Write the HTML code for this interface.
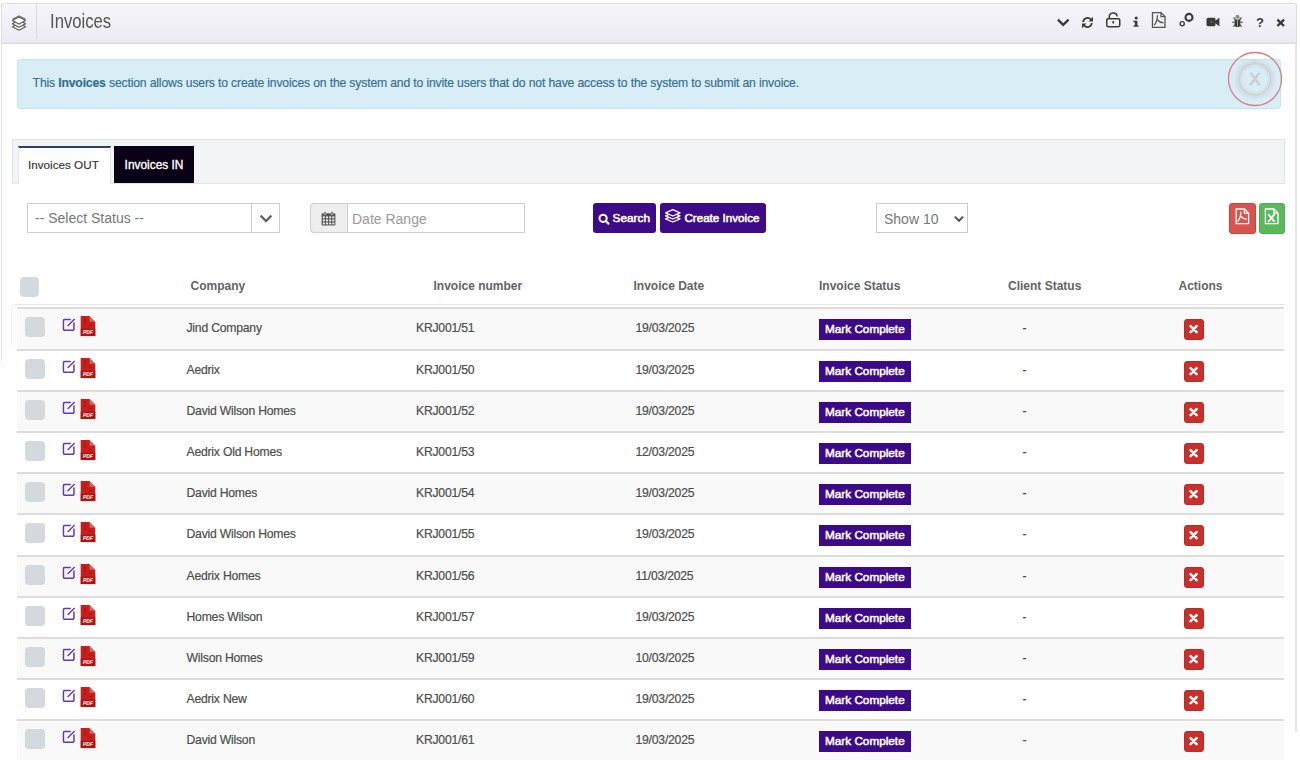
<!DOCTYPE html><html><head><meta charset="utf-8"><style>
*{box-sizing:border-box;margin:0;padding:0}
html,body{width:1300px;height:760px;overflow:hidden;background:#fff;font-family:"Liberation Sans",sans-serif;color:#333}
.a{position:absolute}
.panelL{left:0.5px;top:3px;width:1.6px;height:358px;background:#e2e2e2}
.panelR{left:1295px;top:3px;width:2px;height:729px;background:#e6e6e6}
.hdr{left:1px;top:2.8px;width:1295.5px;height:41.4px;background:linear-gradient(#f6f5fa,#ecebf3);border:1px solid #dcdbe0;border-radius:4px 4px 0 0;box-shadow:inset 0 1px 0 #fbfbfd,inset 0 -1px 0 #e4e3ea}
.hsep{left:36px;top:4px;width:1px;height:35px;background:#d9d9df}
.title{left:50px;top:10.2px;font-size:19.5px;color:#555;transform:scaleX(0.855);transform-origin:0 0}
.info{left:17px;top:59px;width:1264px;height:49.5px;background:#d9edf7;border:1px solid #bce8f1;border-radius:4px}
.infot{left:32.6px;top:76.2px;font-size:12.2px;letter-spacing:-0.16px;-webkit-text-stroke:0.15px #31708f;color:#31708f;white-space:nowrap}
.tabbar{left:12px;top:139px;width:1273px;height:44.5px;background:#f3f4f6;border:1px solid #e1e4e8;border-bottom:1px solid #e1e4e8}
.tabout{left:18px;top:145.5px;width:93px;height:38.5px;background:#fff;border-top:2px solid #2b4266;border-left:1px solid #e3e6ea;border-right:1px solid #e3e6ea}
.tabin{left:114px;top:145.7px;width:80px;height:37.5px;background:#0a0016}
.sel{left:26.7px;top:203.3px;width:253.5px;height:30px;border:1px solid #cfcfcf;background:#fff}
.selsep{left:251px;top:204px;width:1px;height:28.5px;background:#cfcfcf}
.dr{left:310px;top:203px;width:215px;height:30px;border:1px solid #cfcfcf;border-radius:4px 0 0 4px;background:#fff}
.drad{left:310px;top:203px;width:38px;height:30px;background:#eee;border:1px solid #cfcfcf;border-radius:4px 0 0 4px}
.btnp{top:203px;height:30.3px;background:#3d0b87;border-radius:3px;color:#fff;font-weight:bold;font-size:11.5px}
.show{left:876px;top:203px;width:92px;height:30px;border:1px solid #cccccc;background:#fff}
.bpdf{left:1229.2px;top:203px;width:27px;height:30.5px;background:#d9534f;border:1px solid #d43f3a;border-radius:3px}
.bxls{left:1259px;top:203px;width:26.3px;height:30.5px;background:#5cb85c;border:1px solid #4cae4c;border-radius:3px}
.cb{width:19.6px;height:19.5px;background:#d4d9dd;border-radius:4px}
.th{top:278.8px;font-size:12px;font-weight:bold;color:#636363;white-space:nowrap}
.td{font-size:12.2px;letter-spacing:-0.22px;-webkit-text-stroke:0.2px #4e4e4e;color:#4e4e4e;white-space:nowrap}
.badge{width:92px;height:21.4px;background:#3c0a88;color:#fff;font-size:11.5px;font-weight:bold}
.del{width:20.5px;height:21.5px;background:#c9302c;border:1px solid #bb2a26;border-radius:3px}
</style></head><body><div class="a panelL"></div><div class="a panelR"></div>
<div class="a hdr"></div><div class="a hsep"></div>
<svg class="a" style="left:11px;top:14px" width="16" height="16" viewBox="0 0 16 16"><g fill="none" stroke="#666" stroke-width="1.3" stroke-linejoin="round"><path d="M8 2 L14 5 L8 8 L2 5 Z" fill="#fff"/><path d="M2.5 8 L8 10.8 L13.5 8"/><path d="M2.5 10.5 L8 13.3 L13.5 10.5"/></g></svg>
<div class="a title">Invoices</div>
<div class="a info"></div>
<div class="a infot">This <b>Invoices</b> section allows users to create invoices on the system and to invite users that do not have access to the system to submit an invoice.</div>
<div class="a tabbar"></div><div class="a tabout"></div><div class="a tabin"></div>
<div class="a" style="left:28px;top:158px;font-size:11.7px;-webkit-text-stroke:0.15px #333;color:#333">Invoices OUT</div>
<div class="a" style="left:124.6px;top:157.5px;font-size:11.9px;-webkit-text-stroke:0.35px #fff;color:#fff">Invoices IN</div>
<div class="a sel"></div><div class="a selsep"></div>
<div class="a" style="left:35px;top:210.3px;font-size:14px;color:#777">-- Select Status --</div>
<div class="a dr"></div><div class="a drad"></div>
<div class="a" style="left:352px;top:211px;font-size:14px;color:#999">Date Range</div>
<div class="a btnp" style="left:593px;width:63px"></div>
<div class="a btnp" style="left:660px;width:105.5px"></div>
<div class="a" style="left:612.6px;top:211.2px;font-size:11.8px;-webkit-text-stroke:0.55px #fff;color:#fff">Search</div>
<div class="a" style="left:684.4px;top:211.2px;font-size:11.65px;-webkit-text-stroke:0.55px #fff;color:#fff">Create Invoice</div>
<div class="a show"></div>
<div class="a" style="left:884px;top:210.5px;font-size:14px;color:#777">Show 10</div>
<div class="a bpdf"></div><div class="a bxls"></div>
<div class="a cb" style="left:19.6px;top:277px"></div>
<div class="a th" style="left:190.5px">Company</div>
<div class="a th" style="left:433.5px">Invoice number</div>
<div class="a th" style="left:633.5px">Invoice Date</div>
<div class="a th" style="left:819px">Invoice Status</div>
<div class="a th" style="left:1008px">Client Status</div>
<div class="a th" style="left:1178.5px">Actions</div>
<div class="a" style="left:11px;top:305px;width:1px;height:41px;background:#f2f2f2"></div>
<div class="a" style="left:14px;top:304px;width:1271px;height:1px;background:#e6e6e6"></div>
<div class="a" style="left:17px;top:307.0px;width:1266.5px;height:2px;background:#dddddd"></div>
<div class="a" style="left:17px;top:309.0px;width:1266.5px;height:40.0px;background:#f9f9f9"></div>
<div class="a cb" style="left:25px;top:317.0px"></div>
<div class="a td" style="left:186.5px;top:321.1px">Jind Company</div>
<div class="a td" style="left:416px;top:321.1px">KRJ001/51</div>
<div class="a td" style="left:635.5px;top:321.1px">19/03/2025</div>
<div class="a badge" style="left:818.5px;top:318.5px"></div>
<div class="a" style="left:825px;top:322.1px;font-size:11.75px;-webkit-text-stroke:0.5px #fff;color:#fff">Mark Complete</div>
<div class="a td" style="left:1022.5px;top:321.1px">-</div>
<svg class="a" style="left:61px;top:316.5px" width="16" height="16" viewBox="0 0 16 16"><path d="M9.8 2.55 H3.6 A1.15 1.15 0 0 0 2.45 3.7 V12.1 A1.15 1.15 0 0 0 3.6 13.25 H11.8 A1.15 1.15 0 0 0 12.95 12.1 V5.4" fill="none" stroke="#6438b8" stroke-width="1.5"/><path d="M6.6 9 L13.6 2" stroke="#6438b8" stroke-width="1.4"/></svg>
<svg class="a" style="left:80px;top:316.4px" width="16" height="21" viewBox="0 0 16 21"><path d="M0.7 0.1 H9.6 L15.3 5.7 V20.1 H0.7 Z" fill="#c7201c"/><path d="M9.6 0.1 V5.7 H15.3 Z" fill="#f0c8c0" opacity="0.4"/><path d="M0.7 12.6 H15.3 V20.1 H0.7 Z" fill="#b3120f"/><path d="M5 2 V8 M9 9 L12 9.6" stroke="#8c0c0a" stroke-width="0.9" opacity="0.7"/><text x="8" y="18.4" font-family="Liberation Sans" font-size="5" font-weight="bold" fill="#fff" text-anchor="middle" font-style="italic">PDF</text></svg>
<div class="a del" style="left:1183.7px;top:318.7px"></div>
<svg class="a" style="left:1187.2px;top:322.7px" width="13" height="12" viewBox="0 0 13 12"><path d="M3.6 3.1 L9.6 9.1 M9.6 3.1 L3.6 9.1" stroke="#fff" stroke-width="2.6" stroke-linecap="round"/></svg>
<div class="a" style="left:17px;top:349.0px;width:1266.5px;height:2px;background:#dddddd"></div>
<div class="a" style="left:17px;top:351.0px;width:1266.5px;height:39.0px;background:#fff"></div>
<div class="a cb" style="left:25px;top:359.0px"></div>
<div class="a td" style="left:186.5px;top:363.1px">Aedrix</div>
<div class="a td" style="left:416px;top:363.1px">KRJ001/50</div>
<div class="a td" style="left:635.5px;top:363.1px">19/03/2025</div>
<div class="a badge" style="left:818.5px;top:360.5px"></div>
<div class="a" style="left:825px;top:364.1px;font-size:11.75px;-webkit-text-stroke:0.5px #fff;color:#fff">Mark Complete</div>
<div class="a td" style="left:1022.5px;top:363.1px">-</div>
<svg class="a" style="left:61px;top:358.5px" width="16" height="16" viewBox="0 0 16 16"><path d="M9.8 2.55 H3.6 A1.15 1.15 0 0 0 2.45 3.7 V12.1 A1.15 1.15 0 0 0 3.6 13.25 H11.8 A1.15 1.15 0 0 0 12.95 12.1 V5.4" fill="none" stroke="#6438b8" stroke-width="1.5"/><path d="M6.6 9 L13.6 2" stroke="#6438b8" stroke-width="1.4"/></svg>
<svg class="a" style="left:80px;top:358.4px" width="16" height="21" viewBox="0 0 16 21"><path d="M0.7 0.1 H9.6 L15.3 5.7 V20.1 H0.7 Z" fill="#c7201c"/><path d="M9.6 0.1 V5.7 H15.3 Z" fill="#f0c8c0" opacity="0.4"/><path d="M0.7 12.6 H15.3 V20.1 H0.7 Z" fill="#b3120f"/><path d="M5 2 V8 M9 9 L12 9.6" stroke="#8c0c0a" stroke-width="0.9" opacity="0.7"/><text x="8" y="18.4" font-family="Liberation Sans" font-size="5" font-weight="bold" fill="#fff" text-anchor="middle" font-style="italic">PDF</text></svg>
<div class="a del" style="left:1183.7px;top:360.7px"></div>
<svg class="a" style="left:1187.2px;top:364.7px" width="13" height="12" viewBox="0 0 13 12"><path d="M3.6 3.1 L9.6 9.1 M9.6 3.1 L3.6 9.1" stroke="#fff" stroke-width="2.6" stroke-linecap="round"/></svg>
<div class="a" style="left:17px;top:390.0px;width:1266.5px;height:2px;background:#dddddd"></div>
<div class="a" style="left:17px;top:392.0px;width:1266.5px;height:39.0px;background:#f9f9f9"></div>
<div class="a cb" style="left:25px;top:400.0px"></div>
<div class="a td" style="left:186.5px;top:404.1px">David Wilson Homes</div>
<div class="a td" style="left:416px;top:404.1px">KRJ001/52</div>
<div class="a td" style="left:635.5px;top:404.1px">19/03/2025</div>
<div class="a badge" style="left:818.5px;top:401.5px"></div>
<div class="a" style="left:825px;top:405.1px;font-size:11.75px;-webkit-text-stroke:0.5px #fff;color:#fff">Mark Complete</div>
<div class="a td" style="left:1022.5px;top:404.1px">-</div>
<svg class="a" style="left:61px;top:399.5px" width="16" height="16" viewBox="0 0 16 16"><path d="M9.8 2.55 H3.6 A1.15 1.15 0 0 0 2.45 3.7 V12.1 A1.15 1.15 0 0 0 3.6 13.25 H11.8 A1.15 1.15 0 0 0 12.95 12.1 V5.4" fill="none" stroke="#6438b8" stroke-width="1.5"/><path d="M6.6 9 L13.6 2" stroke="#6438b8" stroke-width="1.4"/></svg>
<svg class="a" style="left:80px;top:399.4px" width="16" height="21" viewBox="0 0 16 21"><path d="M0.7 0.1 H9.6 L15.3 5.7 V20.1 H0.7 Z" fill="#c7201c"/><path d="M9.6 0.1 V5.7 H15.3 Z" fill="#f0c8c0" opacity="0.4"/><path d="M0.7 12.6 H15.3 V20.1 H0.7 Z" fill="#b3120f"/><path d="M5 2 V8 M9 9 L12 9.6" stroke="#8c0c0a" stroke-width="0.9" opacity="0.7"/><text x="8" y="18.4" font-family="Liberation Sans" font-size="5" font-weight="bold" fill="#fff" text-anchor="middle" font-style="italic">PDF</text></svg>
<div class="a del" style="left:1183.7px;top:401.7px"></div>
<svg class="a" style="left:1187.2px;top:405.7px" width="13" height="12" viewBox="0 0 13 12"><path d="M3.6 3.1 L9.6 9.1 M9.6 3.1 L3.6 9.1" stroke="#fff" stroke-width="2.6" stroke-linecap="round"/></svg>
<div class="a" style="left:17px;top:431.0px;width:1266.5px;height:2px;background:#dddddd"></div>
<div class="a" style="left:17px;top:433.0px;width:1266.5px;height:39.0px;background:#fff"></div>
<div class="a cb" style="left:25px;top:441.0px"></div>
<div class="a td" style="left:186.5px;top:445.1px">Aedrix Old Homes</div>
<div class="a td" style="left:416px;top:445.1px">KRJ001/53</div>
<div class="a td" style="left:635.5px;top:445.1px">12/03/2025</div>
<div class="a badge" style="left:818.5px;top:442.5px"></div>
<div class="a" style="left:825px;top:446.1px;font-size:11.75px;-webkit-text-stroke:0.5px #fff;color:#fff">Mark Complete</div>
<div class="a td" style="left:1022.5px;top:445.1px">-</div>
<svg class="a" style="left:61px;top:440.5px" width="16" height="16" viewBox="0 0 16 16"><path d="M9.8 2.55 H3.6 A1.15 1.15 0 0 0 2.45 3.7 V12.1 A1.15 1.15 0 0 0 3.6 13.25 H11.8 A1.15 1.15 0 0 0 12.95 12.1 V5.4" fill="none" stroke="#6438b8" stroke-width="1.5"/><path d="M6.6 9 L13.6 2" stroke="#6438b8" stroke-width="1.4"/></svg>
<svg class="a" style="left:80px;top:440.4px" width="16" height="21" viewBox="0 0 16 21"><path d="M0.7 0.1 H9.6 L15.3 5.7 V20.1 H0.7 Z" fill="#c7201c"/><path d="M9.6 0.1 V5.7 H15.3 Z" fill="#f0c8c0" opacity="0.4"/><path d="M0.7 12.6 H15.3 V20.1 H0.7 Z" fill="#b3120f"/><path d="M5 2 V8 M9 9 L12 9.6" stroke="#8c0c0a" stroke-width="0.9" opacity="0.7"/><text x="8" y="18.4" font-family="Liberation Sans" font-size="5" font-weight="bold" fill="#fff" text-anchor="middle" font-style="italic">PDF</text></svg>
<div class="a del" style="left:1183.7px;top:442.7px"></div>
<svg class="a" style="left:1187.2px;top:446.7px" width="13" height="12" viewBox="0 0 13 12"><path d="M3.6 3.1 L9.6 9.1 M9.6 3.1 L3.6 9.1" stroke="#fff" stroke-width="2.6" stroke-linecap="round"/></svg>
<div class="a" style="left:17px;top:472.0px;width:1266.5px;height:2px;background:#dddddd"></div>
<div class="a" style="left:17px;top:474.0px;width:1266.5px;height:39.0px;background:#f9f9f9"></div>
<div class="a cb" style="left:25px;top:482.0px"></div>
<div class="a td" style="left:186.5px;top:486.1px">David Homes</div>
<div class="a td" style="left:416px;top:486.1px">KRJ001/54</div>
<div class="a td" style="left:635.5px;top:486.1px">19/03/2025</div>
<div class="a badge" style="left:818.5px;top:483.5px"></div>
<div class="a" style="left:825px;top:487.1px;font-size:11.75px;-webkit-text-stroke:0.5px #fff;color:#fff">Mark Complete</div>
<div class="a td" style="left:1022.5px;top:486.1px">-</div>
<svg class="a" style="left:61px;top:481.5px" width="16" height="16" viewBox="0 0 16 16"><path d="M9.8 2.55 H3.6 A1.15 1.15 0 0 0 2.45 3.7 V12.1 A1.15 1.15 0 0 0 3.6 13.25 H11.8 A1.15 1.15 0 0 0 12.95 12.1 V5.4" fill="none" stroke="#6438b8" stroke-width="1.5"/><path d="M6.6 9 L13.6 2" stroke="#6438b8" stroke-width="1.4"/></svg>
<svg class="a" style="left:80px;top:481.4px" width="16" height="21" viewBox="0 0 16 21"><path d="M0.7 0.1 H9.6 L15.3 5.7 V20.1 H0.7 Z" fill="#c7201c"/><path d="M9.6 0.1 V5.7 H15.3 Z" fill="#f0c8c0" opacity="0.4"/><path d="M0.7 12.6 H15.3 V20.1 H0.7 Z" fill="#b3120f"/><path d="M5 2 V8 M9 9 L12 9.6" stroke="#8c0c0a" stroke-width="0.9" opacity="0.7"/><text x="8" y="18.4" font-family="Liberation Sans" font-size="5" font-weight="bold" fill="#fff" text-anchor="middle" font-style="italic">PDF</text></svg>
<div class="a del" style="left:1183.7px;top:483.7px"></div>
<svg class="a" style="left:1187.2px;top:487.7px" width="13" height="12" viewBox="0 0 13 12"><path d="M3.6 3.1 L9.6 9.1 M9.6 3.1 L3.6 9.1" stroke="#fff" stroke-width="2.6" stroke-linecap="round"/></svg>
<div class="a" style="left:17px;top:513.0px;width:1266.5px;height:2px;background:#dddddd"></div>
<div class="a" style="left:17px;top:515.0px;width:1266.5px;height:40.0px;background:#fff"></div>
<div class="a cb" style="left:25px;top:523.0px"></div>
<div class="a td" style="left:186.5px;top:527.1px">David Wilson Homes</div>
<div class="a td" style="left:416px;top:527.1px">KRJ001/55</div>
<div class="a td" style="left:635.5px;top:527.1px">19/03/2025</div>
<div class="a badge" style="left:818.5px;top:524.5px"></div>
<div class="a" style="left:825px;top:528.1px;font-size:11.75px;-webkit-text-stroke:0.5px #fff;color:#fff">Mark Complete</div>
<div class="a td" style="left:1022.5px;top:527.1px">-</div>
<svg class="a" style="left:61px;top:522.5px" width="16" height="16" viewBox="0 0 16 16"><path d="M9.8 2.55 H3.6 A1.15 1.15 0 0 0 2.45 3.7 V12.1 A1.15 1.15 0 0 0 3.6 13.25 H11.8 A1.15 1.15 0 0 0 12.95 12.1 V5.4" fill="none" stroke="#6438b8" stroke-width="1.5"/><path d="M6.6 9 L13.6 2" stroke="#6438b8" stroke-width="1.4"/></svg>
<svg class="a" style="left:80px;top:522.4px" width="16" height="21" viewBox="0 0 16 21"><path d="M0.7 0.1 H9.6 L15.3 5.7 V20.1 H0.7 Z" fill="#c7201c"/><path d="M9.6 0.1 V5.7 H15.3 Z" fill="#f0c8c0" opacity="0.4"/><path d="M0.7 12.6 H15.3 V20.1 H0.7 Z" fill="#b3120f"/><path d="M5 2 V8 M9 9 L12 9.6" stroke="#8c0c0a" stroke-width="0.9" opacity="0.7"/><text x="8" y="18.4" font-family="Liberation Sans" font-size="5" font-weight="bold" fill="#fff" text-anchor="middle" font-style="italic">PDF</text></svg>
<div class="a del" style="left:1183.7px;top:524.7px"></div>
<svg class="a" style="left:1187.2px;top:528.7px" width="13" height="12" viewBox="0 0 13 12"><path d="M3.6 3.1 L9.6 9.1 M9.6 3.1 L3.6 9.1" stroke="#fff" stroke-width="2.6" stroke-linecap="round"/></svg>
<div class="a" style="left:17px;top:555.0px;width:1266.5px;height:2px;background:#dddddd"></div>
<div class="a" style="left:17px;top:557.0px;width:1266.5px;height:39.0px;background:#f9f9f9"></div>
<div class="a cb" style="left:25px;top:565.0px"></div>
<div class="a td" style="left:186.5px;top:569.1px">Aedrix Homes</div>
<div class="a td" style="left:416px;top:569.1px">KRJ001/56</div>
<div class="a td" style="left:635.5px;top:569.1px">11/03/2025</div>
<div class="a badge" style="left:818.5px;top:566.5px"></div>
<div class="a" style="left:825px;top:570.1px;font-size:11.75px;-webkit-text-stroke:0.5px #fff;color:#fff">Mark Complete</div>
<div class="a td" style="left:1022.5px;top:569.1px">-</div>
<svg class="a" style="left:61px;top:564.5px" width="16" height="16" viewBox="0 0 16 16"><path d="M9.8 2.55 H3.6 A1.15 1.15 0 0 0 2.45 3.7 V12.1 A1.15 1.15 0 0 0 3.6 13.25 H11.8 A1.15 1.15 0 0 0 12.95 12.1 V5.4" fill="none" stroke="#6438b8" stroke-width="1.5"/><path d="M6.6 9 L13.6 2" stroke="#6438b8" stroke-width="1.4"/></svg>
<svg class="a" style="left:80px;top:564.4px" width="16" height="21" viewBox="0 0 16 21"><path d="M0.7 0.1 H9.6 L15.3 5.7 V20.1 H0.7 Z" fill="#c7201c"/><path d="M9.6 0.1 V5.7 H15.3 Z" fill="#f0c8c0" opacity="0.4"/><path d="M0.7 12.6 H15.3 V20.1 H0.7 Z" fill="#b3120f"/><path d="M5 2 V8 M9 9 L12 9.6" stroke="#8c0c0a" stroke-width="0.9" opacity="0.7"/><text x="8" y="18.4" font-family="Liberation Sans" font-size="5" font-weight="bold" fill="#fff" text-anchor="middle" font-style="italic">PDF</text></svg>
<div class="a del" style="left:1183.7px;top:566.7px"></div>
<svg class="a" style="left:1187.2px;top:570.7px" width="13" height="12" viewBox="0 0 13 12"><path d="M3.6 3.1 L9.6 9.1 M9.6 3.1 L3.6 9.1" stroke="#fff" stroke-width="2.6" stroke-linecap="round"/></svg>
<div class="a" style="left:17px;top:596.0px;width:1266.5px;height:2px;background:#dddddd"></div>
<div class="a" style="left:17px;top:598.0px;width:1266.5px;height:39.0px;background:#fff"></div>
<div class="a cb" style="left:25px;top:606.0px"></div>
<div class="a td" style="left:186.5px;top:610.1px">Homes Wilson</div>
<div class="a td" style="left:416px;top:610.1px">KRJ001/57</div>
<div class="a td" style="left:635.5px;top:610.1px">19/03/2025</div>
<div class="a badge" style="left:818.5px;top:607.5px"></div>
<div class="a" style="left:825px;top:611.1px;font-size:11.75px;-webkit-text-stroke:0.5px #fff;color:#fff">Mark Complete</div>
<div class="a td" style="left:1022.5px;top:610.1px">-</div>
<svg class="a" style="left:61px;top:605.5px" width="16" height="16" viewBox="0 0 16 16"><path d="M9.8 2.55 H3.6 A1.15 1.15 0 0 0 2.45 3.7 V12.1 A1.15 1.15 0 0 0 3.6 13.25 H11.8 A1.15 1.15 0 0 0 12.95 12.1 V5.4" fill="none" stroke="#6438b8" stroke-width="1.5"/><path d="M6.6 9 L13.6 2" stroke="#6438b8" stroke-width="1.4"/></svg>
<svg class="a" style="left:80px;top:605.4px" width="16" height="21" viewBox="0 0 16 21"><path d="M0.7 0.1 H9.6 L15.3 5.7 V20.1 H0.7 Z" fill="#c7201c"/><path d="M9.6 0.1 V5.7 H15.3 Z" fill="#f0c8c0" opacity="0.4"/><path d="M0.7 12.6 H15.3 V20.1 H0.7 Z" fill="#b3120f"/><path d="M5 2 V8 M9 9 L12 9.6" stroke="#8c0c0a" stroke-width="0.9" opacity="0.7"/><text x="8" y="18.4" font-family="Liberation Sans" font-size="5" font-weight="bold" fill="#fff" text-anchor="middle" font-style="italic">PDF</text></svg>
<div class="a del" style="left:1183.7px;top:607.7px"></div>
<svg class="a" style="left:1187.2px;top:611.7px" width="13" height="12" viewBox="0 0 13 12"><path d="M3.6 3.1 L9.6 9.1 M9.6 3.1 L3.6 9.1" stroke="#fff" stroke-width="2.6" stroke-linecap="round"/></svg>
<div class="a" style="left:17px;top:637.0px;width:1266.5px;height:2px;background:#dddddd"></div>
<div class="a" style="left:17px;top:639.0px;width:1266.5px;height:39.0px;background:#f9f9f9"></div>
<div class="a cb" style="left:25px;top:647.0px"></div>
<div class="a td" style="left:186.5px;top:651.1px">Wilson Homes</div>
<div class="a td" style="left:416px;top:651.1px">KRJ001/59</div>
<div class="a td" style="left:635.5px;top:651.1px">10/03/2025</div>
<div class="a badge" style="left:818.5px;top:648.5px"></div>
<div class="a" style="left:825px;top:652.1px;font-size:11.75px;-webkit-text-stroke:0.5px #fff;color:#fff">Mark Complete</div>
<div class="a td" style="left:1022.5px;top:651.1px">-</div>
<svg class="a" style="left:61px;top:646.5px" width="16" height="16" viewBox="0 0 16 16"><path d="M9.8 2.55 H3.6 A1.15 1.15 0 0 0 2.45 3.7 V12.1 A1.15 1.15 0 0 0 3.6 13.25 H11.8 A1.15 1.15 0 0 0 12.95 12.1 V5.4" fill="none" stroke="#6438b8" stroke-width="1.5"/><path d="M6.6 9 L13.6 2" stroke="#6438b8" stroke-width="1.4"/></svg>
<svg class="a" style="left:80px;top:646.4px" width="16" height="21" viewBox="0 0 16 21"><path d="M0.7 0.1 H9.6 L15.3 5.7 V20.1 H0.7 Z" fill="#c7201c"/><path d="M9.6 0.1 V5.7 H15.3 Z" fill="#f0c8c0" opacity="0.4"/><path d="M0.7 12.6 H15.3 V20.1 H0.7 Z" fill="#b3120f"/><path d="M5 2 V8 M9 9 L12 9.6" stroke="#8c0c0a" stroke-width="0.9" opacity="0.7"/><text x="8" y="18.4" font-family="Liberation Sans" font-size="5" font-weight="bold" fill="#fff" text-anchor="middle" font-style="italic">PDF</text></svg>
<div class="a del" style="left:1183.7px;top:648.7px"></div>
<svg class="a" style="left:1187.2px;top:652.7px" width="13" height="12" viewBox="0 0 13 12"><path d="M3.6 3.1 L9.6 9.1 M9.6 3.1 L3.6 9.1" stroke="#fff" stroke-width="2.6" stroke-linecap="round"/></svg>
<div class="a" style="left:17px;top:678.0px;width:1266.5px;height:2px;background:#dddddd"></div>
<div class="a" style="left:17px;top:680.0px;width:1266.5px;height:39.0px;background:#fff"></div>
<div class="a cb" style="left:25px;top:688.0px"></div>
<div class="a td" style="left:186.5px;top:692.1px">Aedrix New</div>
<div class="a td" style="left:416px;top:692.1px">KRJ001/60</div>
<div class="a td" style="left:635.5px;top:692.1px">19/03/2025</div>
<div class="a badge" style="left:818.5px;top:689.5px"></div>
<div class="a" style="left:825px;top:693.1px;font-size:11.75px;-webkit-text-stroke:0.5px #fff;color:#fff">Mark Complete</div>
<div class="a td" style="left:1022.5px;top:692.1px">-</div>
<svg class="a" style="left:61px;top:687.5px" width="16" height="16" viewBox="0 0 16 16"><path d="M9.8 2.55 H3.6 A1.15 1.15 0 0 0 2.45 3.7 V12.1 A1.15 1.15 0 0 0 3.6 13.25 H11.8 A1.15 1.15 0 0 0 12.95 12.1 V5.4" fill="none" stroke="#6438b8" stroke-width="1.5"/><path d="M6.6 9 L13.6 2" stroke="#6438b8" stroke-width="1.4"/></svg>
<svg class="a" style="left:80px;top:687.4px" width="16" height="21" viewBox="0 0 16 21"><path d="M0.7 0.1 H9.6 L15.3 5.7 V20.1 H0.7 Z" fill="#c7201c"/><path d="M9.6 0.1 V5.7 H15.3 Z" fill="#f0c8c0" opacity="0.4"/><path d="M0.7 12.6 H15.3 V20.1 H0.7 Z" fill="#b3120f"/><path d="M5 2 V8 M9 9 L12 9.6" stroke="#8c0c0a" stroke-width="0.9" opacity="0.7"/><text x="8" y="18.4" font-family="Liberation Sans" font-size="5" font-weight="bold" fill="#fff" text-anchor="middle" font-style="italic">PDF</text></svg>
<div class="a del" style="left:1183.7px;top:689.7px"></div>
<svg class="a" style="left:1187.2px;top:693.7px" width="13" height="12" viewBox="0 0 13 12"><path d="M3.6 3.1 L9.6 9.1 M9.6 3.1 L3.6 9.1" stroke="#fff" stroke-width="2.6" stroke-linecap="round"/></svg>
<div class="a" style="left:17px;top:719.0px;width:1266.5px;height:2px;background:#dddddd"></div>
<div class="a" style="left:17px;top:721.0px;width:1266.5px;height:39.0px;background:#f9f9f9"></div>
<div class="a cb" style="left:25px;top:729.0px"></div>
<div class="a td" style="left:186.5px;top:733.1px">David Wilson</div>
<div class="a td" style="left:416px;top:733.1px">KRJ001/61</div>
<div class="a td" style="left:635.5px;top:733.1px">19/03/2025</div>
<div class="a badge" style="left:818.5px;top:730.5px"></div>
<div class="a" style="left:825px;top:734.1px;font-size:11.75px;-webkit-text-stroke:0.5px #fff;color:#fff">Mark Complete</div>
<div class="a td" style="left:1022.5px;top:733.1px">-</div>
<svg class="a" style="left:61px;top:728.5px" width="16" height="16" viewBox="0 0 16 16"><path d="M9.8 2.55 H3.6 A1.15 1.15 0 0 0 2.45 3.7 V12.1 A1.15 1.15 0 0 0 3.6 13.25 H11.8 A1.15 1.15 0 0 0 12.95 12.1 V5.4" fill="none" stroke="#6438b8" stroke-width="1.5"/><path d="M6.6 9 L13.6 2" stroke="#6438b8" stroke-width="1.4"/></svg>
<svg class="a" style="left:80px;top:728.4px" width="16" height="21" viewBox="0 0 16 21"><path d="M0.7 0.1 H9.6 L15.3 5.7 V20.1 H0.7 Z" fill="#c7201c"/><path d="M9.6 0.1 V5.7 H15.3 Z" fill="#f0c8c0" opacity="0.4"/><path d="M0.7 12.6 H15.3 V20.1 H0.7 Z" fill="#b3120f"/><path d="M5 2 V8 M9 9 L12 9.6" stroke="#8c0c0a" stroke-width="0.9" opacity="0.7"/><text x="8" y="18.4" font-family="Liberation Sans" font-size="5" font-weight="bold" fill="#fff" text-anchor="middle" font-style="italic">PDF</text></svg>
<div class="a del" style="left:1183.7px;top:730.7px"></div>
<svg class="a" style="left:1187.2px;top:734.7px" width="13" height="12" viewBox="0 0 13 12"><path d="M3.6 3.1 L9.6 9.1 M9.6 3.1 L3.6 9.1" stroke="#fff" stroke-width="2.6" stroke-linecap="round"/></svg>
<svg class="a" style="left:10px;top:13.8px" width="18" height="18" viewBox="0 0 18 18"><g fill="#f4f4f6" stroke="#606060" stroke-width="1.1" stroke-linejoin="round"><path d="M9 9.3 L15.6 12.8 L9 16.3 L2.4 12.8 Z"/><path d="M9 6.2 L15.6 9.7 L9 13.2 L2.4 9.7 Z"/><path d="M9 3.1 L15.6 6.6 L9 10.1 L2.4 6.6 Z" fill="#fff"/></g></svg>
<svg class="a" style="left:1056px;top:16px" width="14" height="12" viewBox="0 0 14 12"><path d="M2.7 4.4 L7.2 8.8 L11.7 4.4" fill="none" stroke="#3a3a3a" stroke-width="2.3" stroke-linecap="square"/></svg>
<svg class="a" style="left:1081px;top:16px" width="13" height="13" viewBox="0 0 13 13"><g fill="none" stroke="#3a3a3a" stroke-width="1.8"><path d="M2.2 6 A4.4 4.4 0 0 1 10 3.6"/><path d="M10.8 7 A4.4 4.4 0 0 1 3 9.4"/></g><path d="M12 0.8 L12 5.4 L7.6 5.4 Z" fill="#3a3a3a"/><path d="M1 12.2 L1 7.6 L5.4 7.6 Z" fill="#3a3a3a"/></svg>
<svg class="a" style="left:1105px;top:11px" width="17" height="18" viewBox="0 0 17 18"><g fill="none" stroke="#3a3a3a" stroke-width="1.5"><rect x="1.75" y="7.65" width="13" height="8" rx="1.4"/><path d="M4.25 7.6 V6.15 A4 4 0 0 1 12.2 5.4"/></g><circle cx="8.25" cy="11" r="1.1" fill="#3a3a3a"/><path d="M7.7 11 H8.8 L8.6 13 H7.9Z" fill="#3a3a3a"/></svg>
<svg class="a" style="left:1132px;top:16px" width="8" height="12" viewBox="0 0 8 12"><circle cx="4.2" cy="2" r="1.5" fill="#3a3a3a"/><path d="M1.4 4.8 H5.4 V9.4 H6.6 V10.8 H1.4 V9.4 H2.8 V6.2 H1.4 Z" fill="#3a3a3a"/></svg>
<svg class="a" style="left:1151px;top:11px" width="16" height="18" viewBox="0 0 16 18"><g fill="none" stroke="#555" stroke-width="1.3"><path d="M1.5 1.6 H10 L14 5.6 V16.4 H1.5 Z"/><path d="M10 1.6 V5.6 H14"/><path d="M3.2 14.2 C5 12 6.6 9 6.4 4.2 M6.6 8.6 C8.4 11.2 10.6 12 12.6 11.6"/></g></svg>
<svg class="a" style="left:1178px;top:12px" width="17" height="17" viewBox="0 0 17 17"><g fill="none" stroke="#3a3a3a"><circle cx="11" cy="5.4" r="3.5" stroke-width="2.1"/><circle cx="4.2" cy="11.8" r="2.1" stroke-width="1.3"/></g></svg>
<svg class="a" style="left:1206px;top:17px" width="14" height="10" viewBox="0 0 14 10"><rect x="0.5" y="0.8" width="9" height="8.4" rx="1.6" fill="#3a3a3a"/><path d="M9 4 L13.4 0.8 V9.2 L9 6 Z" fill="#3a3a3a"/><rect x="4" y="3.6" width="2.4" height="2.4" fill="#555"/></svg>
<svg class="a" style="left:1231px;top:15px" width="13" height="13" viewBox="0 0 13 13"><g stroke="#3a3a3a" stroke-width="1.1" fill="none"><path d="M2.6 2.6 L4.4 4.6 M10.4 2.6 L8.6 4.6 M1.2 7.2 H3.6 M9.4 7.2 H11.8 M2.4 11.6 L4.2 9.8 M10.6 11.6 L8.8 9.8"/></g><path d="M4.6 1.8 A1.9 1.9 0 0 1 8.4 1.8 L8.8 3.6 H4.2 Z" fill="#888"/><path d="M3.6 4.4 H9.4 V9.2 A2.9 2.9 0 0 1 3.6 9.2 Z" fill="#3a3a3a"/><rect x="6.1" y="4.4" width="0.9" height="7" fill="#7fcf7f"/></svg>
<div class="a" style="left:1256px;top:15px;font-size:13px;font-weight:bold;color:#3a3a3a">?</div>
<svg class="a" style="left:1275px;top:17px" width="11" height="11" viewBox="0 0 11 11"><path d="M2.4 2.6 L9 9 M9 2.6 L2.4 9" stroke="#3a3a3a" stroke-width="2.4"/></svg>
<svg class="a" style="left:1226px;top:50px" width="58" height="58" viewBox="0 0 58 58"><defs><filter id="bl" x="-50%" y="-50%" width="200%" height="200%"><feGaussianBlur stdDeviation="2"/></filter></defs><circle cx="29" cy="29" r="26.5" fill="none" stroke="#d77f85" stroke-width="1.3"/><circle cx="29" cy="29.2" r="16.5" fill="none" stroke="#c4c4c4" stroke-width="3.5" filter="url(#bl)" opacity="0.7"/><circle cx="29" cy="29.2" r="15.6" fill="none" stroke="#d0d0d0" stroke-width="1.2"/></svg>
<div class="a" style="left:1249.2px;top:69.8px;font-size:17px;-webkit-text-stroke:0.6px #cbcbcb;color:#cbcbcb">X</div>
<svg class="a" style="left:258px;top:212px" width="16" height="12" viewBox="0 0 16 12"><path d="M2.6 3.6 L8 9 L13.4 3.6" fill="none" stroke="#666" stroke-width="2.4"/></svg>
<svg class="a" style="left:321px;top:211px" width="15" height="15" viewBox="0 0 15 15"><rect x="0.6" y="2.2" width="13.8" height="12.4" rx="1" fill="#555"/><g fill="#eee"><rect x="1.80" y="5.40" width="2.1" height="1.9"/><rect x="4.95" y="5.40" width="2.1" height="1.9"/><rect x="8.10" y="5.40" width="2.1" height="1.9"/><rect x="11.25" y="5.40" width="2.1" height="1.9"/><rect x="1.80" y="8.45" width="2.1" height="1.9"/><rect x="4.95" y="8.45" width="2.1" height="1.9"/><rect x="8.10" y="8.45" width="2.1" height="1.9"/><rect x="11.25" y="8.45" width="2.1" height="1.9"/><rect x="1.80" y="11.50" width="2.1" height="1.9"/><rect x="4.95" y="11.50" width="2.1" height="1.9"/><rect x="8.10" y="11.50" width="2.1" height="1.9"/><rect x="11.25" y="11.50" width="2.1" height="1.9"/></g><rect x="3" y="0.4" width="2" height="3.4" rx="1" fill="#555" stroke="#eee" stroke-width="0.6"/><rect x="10" y="0.4" width="2" height="3.4" rx="1" fill="#555" stroke="#eee" stroke-width="0.6"/></svg>
<svg class="a" style="left:597px;top:212px" width="14" height="14" viewBox="0 0 14 14"><circle cx="6.1" cy="6.3" r="3.6" fill="none" stroke="#fff" stroke-width="2"/><path d="M8.8 9 L11.4 11.6" stroke="#fff" stroke-width="2.2" stroke-linecap="round"/></svg>
<svg class="a" style="left:664px;top:208px" width="18" height="16" viewBox="0 0 18 16"><g fill="#3d0c88" stroke="#fff" stroke-width="1.35" stroke-linejoin="round"><path d="M8.8 7.6 L16 10.8 L8.8 14 L1.6 10.8 Z"/><path d="M8.8 4.6 L16 7.8 L8.8 11 L1.6 7.8 Z"/><path d="M8.8 1.6 L16 4.8 L8.8 8 L1.6 4.8 Z"/></g></svg>
<svg class="a" style="left:953px;top:213.5px" width="12" height="10" viewBox="0 0 12 10"><path d="M1.8 2.6 L6 6.8 L10.2 2.6" fill="none" stroke="#555" stroke-width="2"/></svg>
<svg class="a" style="left:1235px;top:208px" width="15" height="17" viewBox="0 0 15 17"><g fill="none" stroke="#fff" stroke-width="1.3"><path d="M1.2 1 H9.4 L13.6 5.2 V15.6 H1.2 Z"/><path d="M9.4 1 V5.2 H13.6"/><path d="M2.6 13.6 C4.4 11.4 6 8.4 5.8 3.6 M6 8 C7.6 10.6 9.8 11.2 11.8 10.8"/></g></svg>
<svg class="a" style="left:1264px;top:208px" width="16" height="17" viewBox="0 0 16 17"><g fill="none" stroke="#fff" stroke-width="1.3"><path d="M1.4 1 H9.8 L14 5.2 V15.6 H1.4 Z"/><path d="M9.8 1 V5.2 H14"/></g><path d="M4.2 6.2 L10.6 13.8 M10.6 6.2 L4.2 13.8" stroke="#fff" stroke-width="1.8"/></svg></body></html>
